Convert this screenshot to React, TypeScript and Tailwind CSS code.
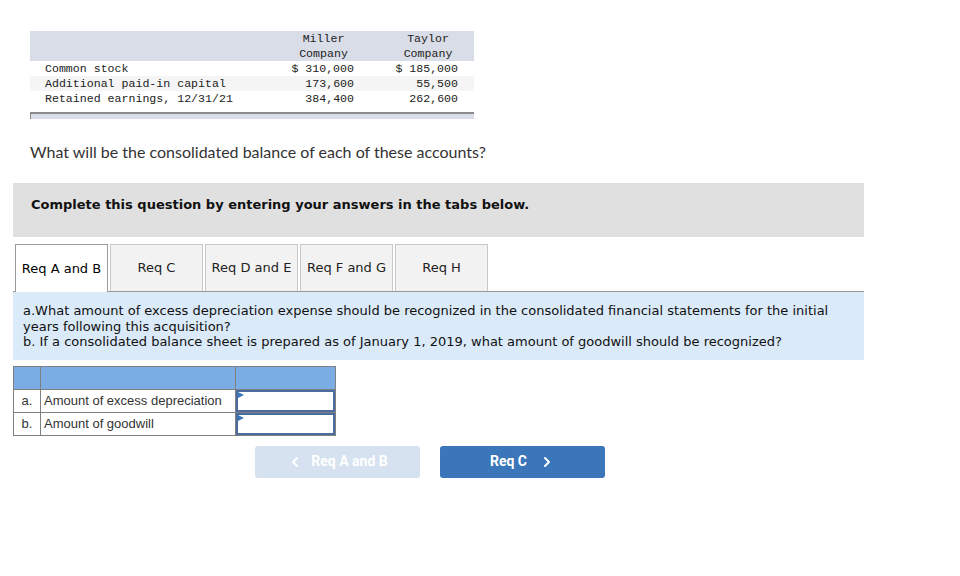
import { ChevronLeft, ChevronRight } from 'lucide-react'

const MONO = { fontFamily: '"Liberation Mono", "DejaVu Sans Mono", monospace' }
const VERDANA = { fontFamily: '"DejaVu Sans", Verdana, sans-serif' }
const ARIAL = { fontFamily: '"Liberation Sans", Arial, sans-serif' }

const rows = [
  { label: 'Common stock', miller: '$ 310,000', taylor: '$ 185,000', shade: false },
  { label: 'Additional paid-in capital', miller: '173,600', taylor: '55,500', shade: true },
  { label: 'Retained earnings, 12/31/21', miller: '384,400', taylor: '262,600', shade: false },
]

const tabs = ['Req A and B', 'Req C', 'Req D and E', 'Req F and G', 'Req H']

function BalanceTable() {
  return (
    <div className="w-[444px] text-[11.6px] leading-[15px] text-[#222]" style={MONO}>
      <div className="grid grid-cols-[258px_72px_32px_72px_10px] h-[30px] bg-[#d9dde7]">
        <div />
        <div className="text-center pr-[1px]">Miller<br />Company</div>
        <div />
        <div className="text-center">Taylor<br />Company</div>
        <div />
      </div>
      {rows.map((r) => (
        <div
          key={r.label}
          className={`grid grid-cols-[258px_72px_32px_72px_10px] h-[15px] ${r.shade ? 'bg-[#f5f5f5]' : 'bg-white'}`}
        >
          <div className="pl-[15px] whitespace-pre">{r.label}</div>
          <div className="text-right pr-[6px] whitespace-pre">{r.miller}</div>
          <div />
          <div className="text-right pr-[6px] whitespace-pre">{r.taylor}</div>
          <div />
        </div>
      ))}
      <div className="h-[6px]" />
      <div className="h-[7px] bg-[#d9dde7] border-t-2 border-l border-[#8a8a8a]" />
    </div>
  )
}

function Tabs() {
  return (
    <div className="flex items-end gap-[2px] pl-[2px] border-b border-[#999] h-[48px]" style={VERDANA}>
      {tabs.map((t, i) =>
        i === 0 ? (
          <div
            key={t}
            className="w-[93px] h-[48px] -mb-px bg-white border border-b-0 border-[#9a9a9a] flex items-center justify-center text-[13px] text-black"
          >
            {t}
          </div>
        ) : (
          <div
            key={t}
            className="w-[93px] h-[47px] bg-[#f2f2f2] border border-b-0 border-[#c8c8c8] flex items-center justify-center text-[13px] text-[#222]"
          >
            {t}
          </div>
        ),
      )}
    </div>
  )
}

function AnswerTable() {
  const items = [
    { k: 'a.', label: 'Amount of excess depreciation' },
    { k: 'b.', label: 'Amount of goodwill' },
  ]
  return (
    <table className="border-collapse w-[323px] text-[13px] text-[#333]" style={ARIAL}>
      <tbody>
        <tr className="h-[23px] bg-[#79ade4]">
          <td className="w-[27px] border border-[#808080]" />
          <td className="w-[195px] border border-[#808080]" />
          <td className="border border-[#808080]" />
        </tr>
        {items.map((it) => (
          <tr key={it.k} className="h-[23px]">
            <td className="border border-[#808080] text-center">{it.k}</td>
            <td className="border border-[#808080] pl-[3px]">{it.label}</td>
            <td className="border border-[#808080] p-0">
              <div className="relative h-[22px] border-2 border-[#4a6c9e] bg-white">
                <svg className="absolute left-0 top-0" width="6" height="7" viewBox="0 0 6 7">
                  <polygon points="0,0 6,3 0,6" fill="#3b78bb" />
                </svg>
              </div>
            </td>
          </tr>
        ))}
      </tbody>
    </table>
  )
}

export default function App() {
  return (
    <div className="w-[960px] h-[576px] bg-white overflow-hidden">
      <div className="pt-[31px] pl-[30px]">
        <BalanceTable />
      </div>

      <p className="mt-[23px] ml-[30px] text-[16px] leading-[20px] text-[#333]" style={{ fontFamily: 'Lato, "Open Sans", sans-serif' }}>
        What will be the consolidated balance of each of these accounts?
      </p>

      <div className="mt-[21px] ml-[13px] w-[851px] h-[54px] bg-[#e0e0e0] pl-[18px] pt-[14px]" style={VERDANA}>
        <p className="text-[13px] leading-[16px] font-bold text-[#111]">
          Complete this question by entering your answers in the tabs below.
        </p>
      </div>

      <div className="mt-[7px] ml-[13px] w-[851px]">
        <Tabs />
        <div className="bg-[#daeaf8] px-[10px] pt-[11px] pb-[10px] text-[13px] leading-[15.5px] text-[#111]" style={VERDANA}>
          <div className="whitespace-nowrap">
            a.What amount of excess depreciation expense should be recognized in the consolidated financial statements for the initial
          </div>
          <div className="whitespace-nowrap">years following this acquisition?</div>
          <div className="whitespace-nowrap">
            b. If a consolidated balance sheet is prepared as of January 1, 2019, what amount of goodwill should be recognized?
          </div>
        </div>
      </div>

      <div className="mt-[6px] ml-[13px]">
        <AnswerTable />
      </div>

      <div className="mt-[10px] ml-[255px] flex gap-[20px]" style={{ fontFamily: 'Roboto, "Liberation Sans", sans-serif' }}>
        <button className="w-[165px] h-[32px] rounded-[3px] bg-[#d6e2f0] text-white font-bold text-[14px] flex items-center justify-center gap-[8px]">
          <ChevronLeft size={16} strokeWidth={3} />
          <span>Req A and B</span>
        </button>
        <button className="w-[165px] h-[32px] rounded-[3px] bg-[#3a76b9] text-white font-bold text-[14px] flex items-center justify-center gap-[12px]">
          <span>Req C</span>
          <ChevronRight size={16} strokeWidth={3} />
        </button>
      </div>
    </div>
  )
}
